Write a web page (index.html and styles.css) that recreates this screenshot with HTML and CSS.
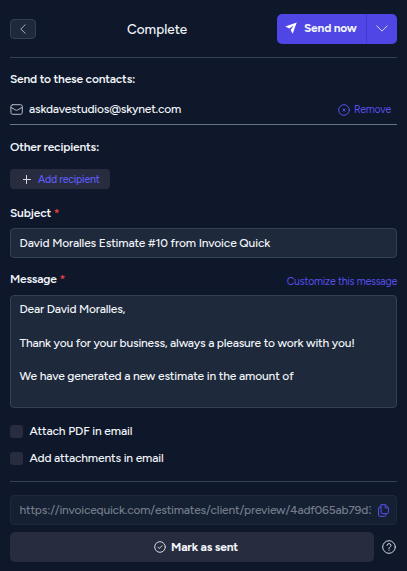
FILE: index.html
```html
<!DOCTYPE html>
<html lang="en">
<head>
    <meta charset="UTF-8">
    <meta name="viewport" content="width=device-width, initial-scale=1.0">
    <title>Complete</title>
    <link rel="stylesheet" href="styles.css">
</head>
<body>
    <div class="panel">
        <!-- header -->
        <header class="header">
            <button class="back" aria-label="Back">
                <svg width="6" height="10" viewBox="0 0 6 10"><path d="M5.2.7.8 5l4.4 4.3"/></svg>
            </button>
            <h1 class="title">Complete</h1>
            <div class="send">
                <button class="send-main">
                    <svg width="12" height="12" viewBox="0 0 12 12"><path d="M11.7.4 7.7 11.7 5.6 7.9 8.8 3.4 4.2 6.5.3 4.6z"/></svg>
                    <span>Send now</span>
                </button>
                <button class="send-more" aria-label="More">
                    <svg width="12" height="7" viewBox="0 0 12 7"><path d="M.7.8 6 6.1 11.3.8"/></svg>
                </button>
            </div>
        </header>

        <!-- recipients -->
        <h2 class="label label-contacts">Send to these contacts:</h2>
        <div class="contact">
            <svg class="mail" width="13" height="11" viewBox="0 0 13 11"><rect x=".9" y=".7" width="11.4" height="9.6" rx="1.8"/><path d="M1 3.4 5.6 6q1 .6 2 0l4.5-2.6"/></svg>
            <span class="email">askdavestudios@skynet.com</span>
            <a class="link remove">
                <svg width="12" height="12" viewBox="0 0 12 12"><circle cx="6" cy="6" r="5.3"/><path d="m4.8 4.8 2.4 2.4m0-2.4L4.8 7.2"/></svg>
                <span>Remove</span>
            </a>
        </div>
        <h2 class="label label-other">Other recipients:</h2>
        <button class="add">
            <svg width="8" height="9" viewBox="0 0 8 9"><path d="M3.5.5v8M0 4.5h7.5"/></svg>
            <span>Add recipient</span>
        </button>

        <!-- message form -->
        <div class="label label-subject">Subject <i class="star">*</i></div>
        <div class="field subject">David Moralles Estimate #10 from Invoice Quick</div>
        <div class="label-row">
            <div class="label">Message <i class="star">*</i></div>
            <a class="link customize">Customize this message</a>
        </div>
        <div class="message">
            <p>Dear David Moralles,</p>
            <p>Thank you for your business, always a pleasure to work with you!</p>
            <p class="amount">We have generated a new estimate in the amount of</p>
        </div>
        <label class="check"><span class="box"></span>Attach PDF in email</label>
        <label class="check"><span class="box"></span>Add attachments in email</label>

        <!-- share link and status -->
        <div class="share">
            <div class="field url">
                <span class="url-text">https://invoicequick.com/estimates/client/preview/4adf065ab79d3</span>
                <svg class="copy" width="11" height="13" viewBox="0 0 11 13"><path d="M3.2.7h4.2l3 3v4.9q0 1-1 1H4.2q-1 0-1-1zM7.2.9v3h3M3 3H1.6q-1 0-1 1v7.3q0 1 1 1h5.2q1 0 1-1V10"/></svg>
            </div>
            <div class="actions">
                <button class="mark">
                    <svg width="12" height="12" viewBox="0 0 12 12"><circle cx="6" cy="6" r="5.3"/><path d="m4 6.2 1.3 1.3L8 4.7"/></svg>
                    <span>Mark as sent</span>
                </button>
                <svg class="help" width="14" height="14" viewBox="0 0 14 14"><circle cx="7" cy="7" r="6.3"/><path d="M5 5.4Q5.1 3.6 7 3.6t2 1.8Q9 6.4 8 6.9 7 7.4 7 8.5M7 10v.4"/></svg>
            </div>
        </div>
    </div>
</body>
</html>
```
FILE: styles.css
```css
* {
  margin: 0;
  padding: 0;
  box-sizing: border-box;
}
body {
  background: #0f172a;
  color: #f1f5f9;
  font: 500 12px/16px Figtree, Inter, sans-serif;
  letter-spacing: -0.2px;
}
button {
  border: none;
  color: inherit;
  font: inherit;
  letter-spacing: inherit;
  cursor: pointer;
}
svg {
  display: block;
  flex: none;
  fill: none;
  stroke: #d3d8e0;
  stroke-width: 1;
  stroke-linecap: round;
  stroke-linejoin: round;
}
.panel {
  height: 571px;
  padding: 0 10px;
  white-space: nowrap;
}
.header {
  display: grid;
  grid-template-columns: 117px 1fr 120px;
  align-items: center;
  height: 58px;
  border-bottom: 1px solid #334155;
}
.back {
  display: flex;
  align-items: center;
  justify-content: center;
  width: 26px;
  height: 20px;
  background: #1e293b;
  border: 1px solid #334155;
  border-radius: 4px;
}
.back svg {
  stroke: #a5afbd;
}
.title {
  font-size: 13.5px;
  font-weight: 500;
  letter-spacing: 0;
}
.send {
  display: flex;
  height: 30px;
  background: #4f46e5;
  border-radius: 5px;
}
.send button {
  display: flex;
  align-items: center;
  background: none;
}
.send-main {
  width: 89px;
  gap: 7px;
  padding-left: 8px;
}
.send .send-main {
  padding-bottom: 1px;
  font-weight: 700;
}
.send-main svg {
  fill: #fff;
  stroke: none;
}
.send .send-more {
  width: 31px;
  justify-content: center;
  border-left: 1px solid #4338ca;
}
.label {
  font-size: 12px;
  font-weight: 600;
  line-height: 16px;
}
.label-contacts {
  margin-top: 13px;
}
.contact {
  display: flex;
  align-items: center;
  height: 38px;
  padding-top: 7px;
  border-bottom: 1px solid #64748b;
}
.mail {
  stroke: #b4bbc6;
}
.email {
  margin-left: 6px;
}
.link {
  color: #5850ec;
  font-size: 10.5px;
  font-weight: 400;
}
.remove {
  display: flex;
  align-items: center;
  gap: 4px;
  margin-left: auto;
  padding: 1px 6px 0 0;
}
.remove svg,
.copy {
  stroke: #5850ec;
}
.label-other {
  margin-top: 14px;
}
.add {
  display: flex;
  align-items: center;
  gap: 7px;
  width: 100px;
  height: 20px;
  margin-top: 14px;
  padding-left: 13px;
  background: #272d3f;
  border-radius: 4px;
  color: #5f5af6;
  font-size: 10.5px;
}
.add span {
  padding-top: 1px;
}
.label-subject {
  margin-top: 16px;
}
.star {
  color: #ef4444;
  font-style: normal;
}
.field {
  display: flex;
  align-items: center;
  height: 30px;
  margin-top: 7px;
  padding: 0 8.5px;
  background: #1e293b;
  border: 1px solid #334155;
  border-radius: 4px;
}
.subject,
.amount,
.check {
  letter-spacing: -0.16px;
}
.label-row {
  display: flex;
  justify-content: space-between;
  height: 16px;
  margin-top: 13px;
}
.customize {
  padding-top: 3px;
}
.message {
  height: 113px;
  margin-top: 8px;
  padding: 5px 8.5px;
  background: #1e293b;
  border: 1px solid #334155;
  border-radius: 4px;
  line-height: 16.8px;
}
.message p {
  margin-bottom: 16.8px;
}
.check {
  display: flex;
  align-items: center;
  gap: 6.5px;
  height: 16px;
  margin-top: 11px;
}
.message + .check {
  margin-top: 15px;
}
.box {
  width: 13px;
  height: 13px;
  background: #272d3f;
  border-radius: 3px;
}
.share {
  margin-top: 15px;
  border-top: 1px solid #334155;
}
.url {
  gap: 7px;
  margin-top: 13px;
  padding-right: 7px;
  background: #152033;
  border-color: #1e293b;
  color: #737b89;
}
.url-text {
  flex: 1;
  overflow: hidden;
}
.actions {
  display: flex;
  align-items: center;
  justify-content: space-between;
  margin-top: 7px;
  padding-right: 1px;
}
.mark {
  display: flex;
  align-items: center;
  justify-content: center;
  gap: 5px;
  width: 364px;
  height: 30px;
  padding-left: 8px;
  padding-bottom: 1px;
  background: #272d3f;
  border-radius: 5px;
  font-weight: 700;
}
```
